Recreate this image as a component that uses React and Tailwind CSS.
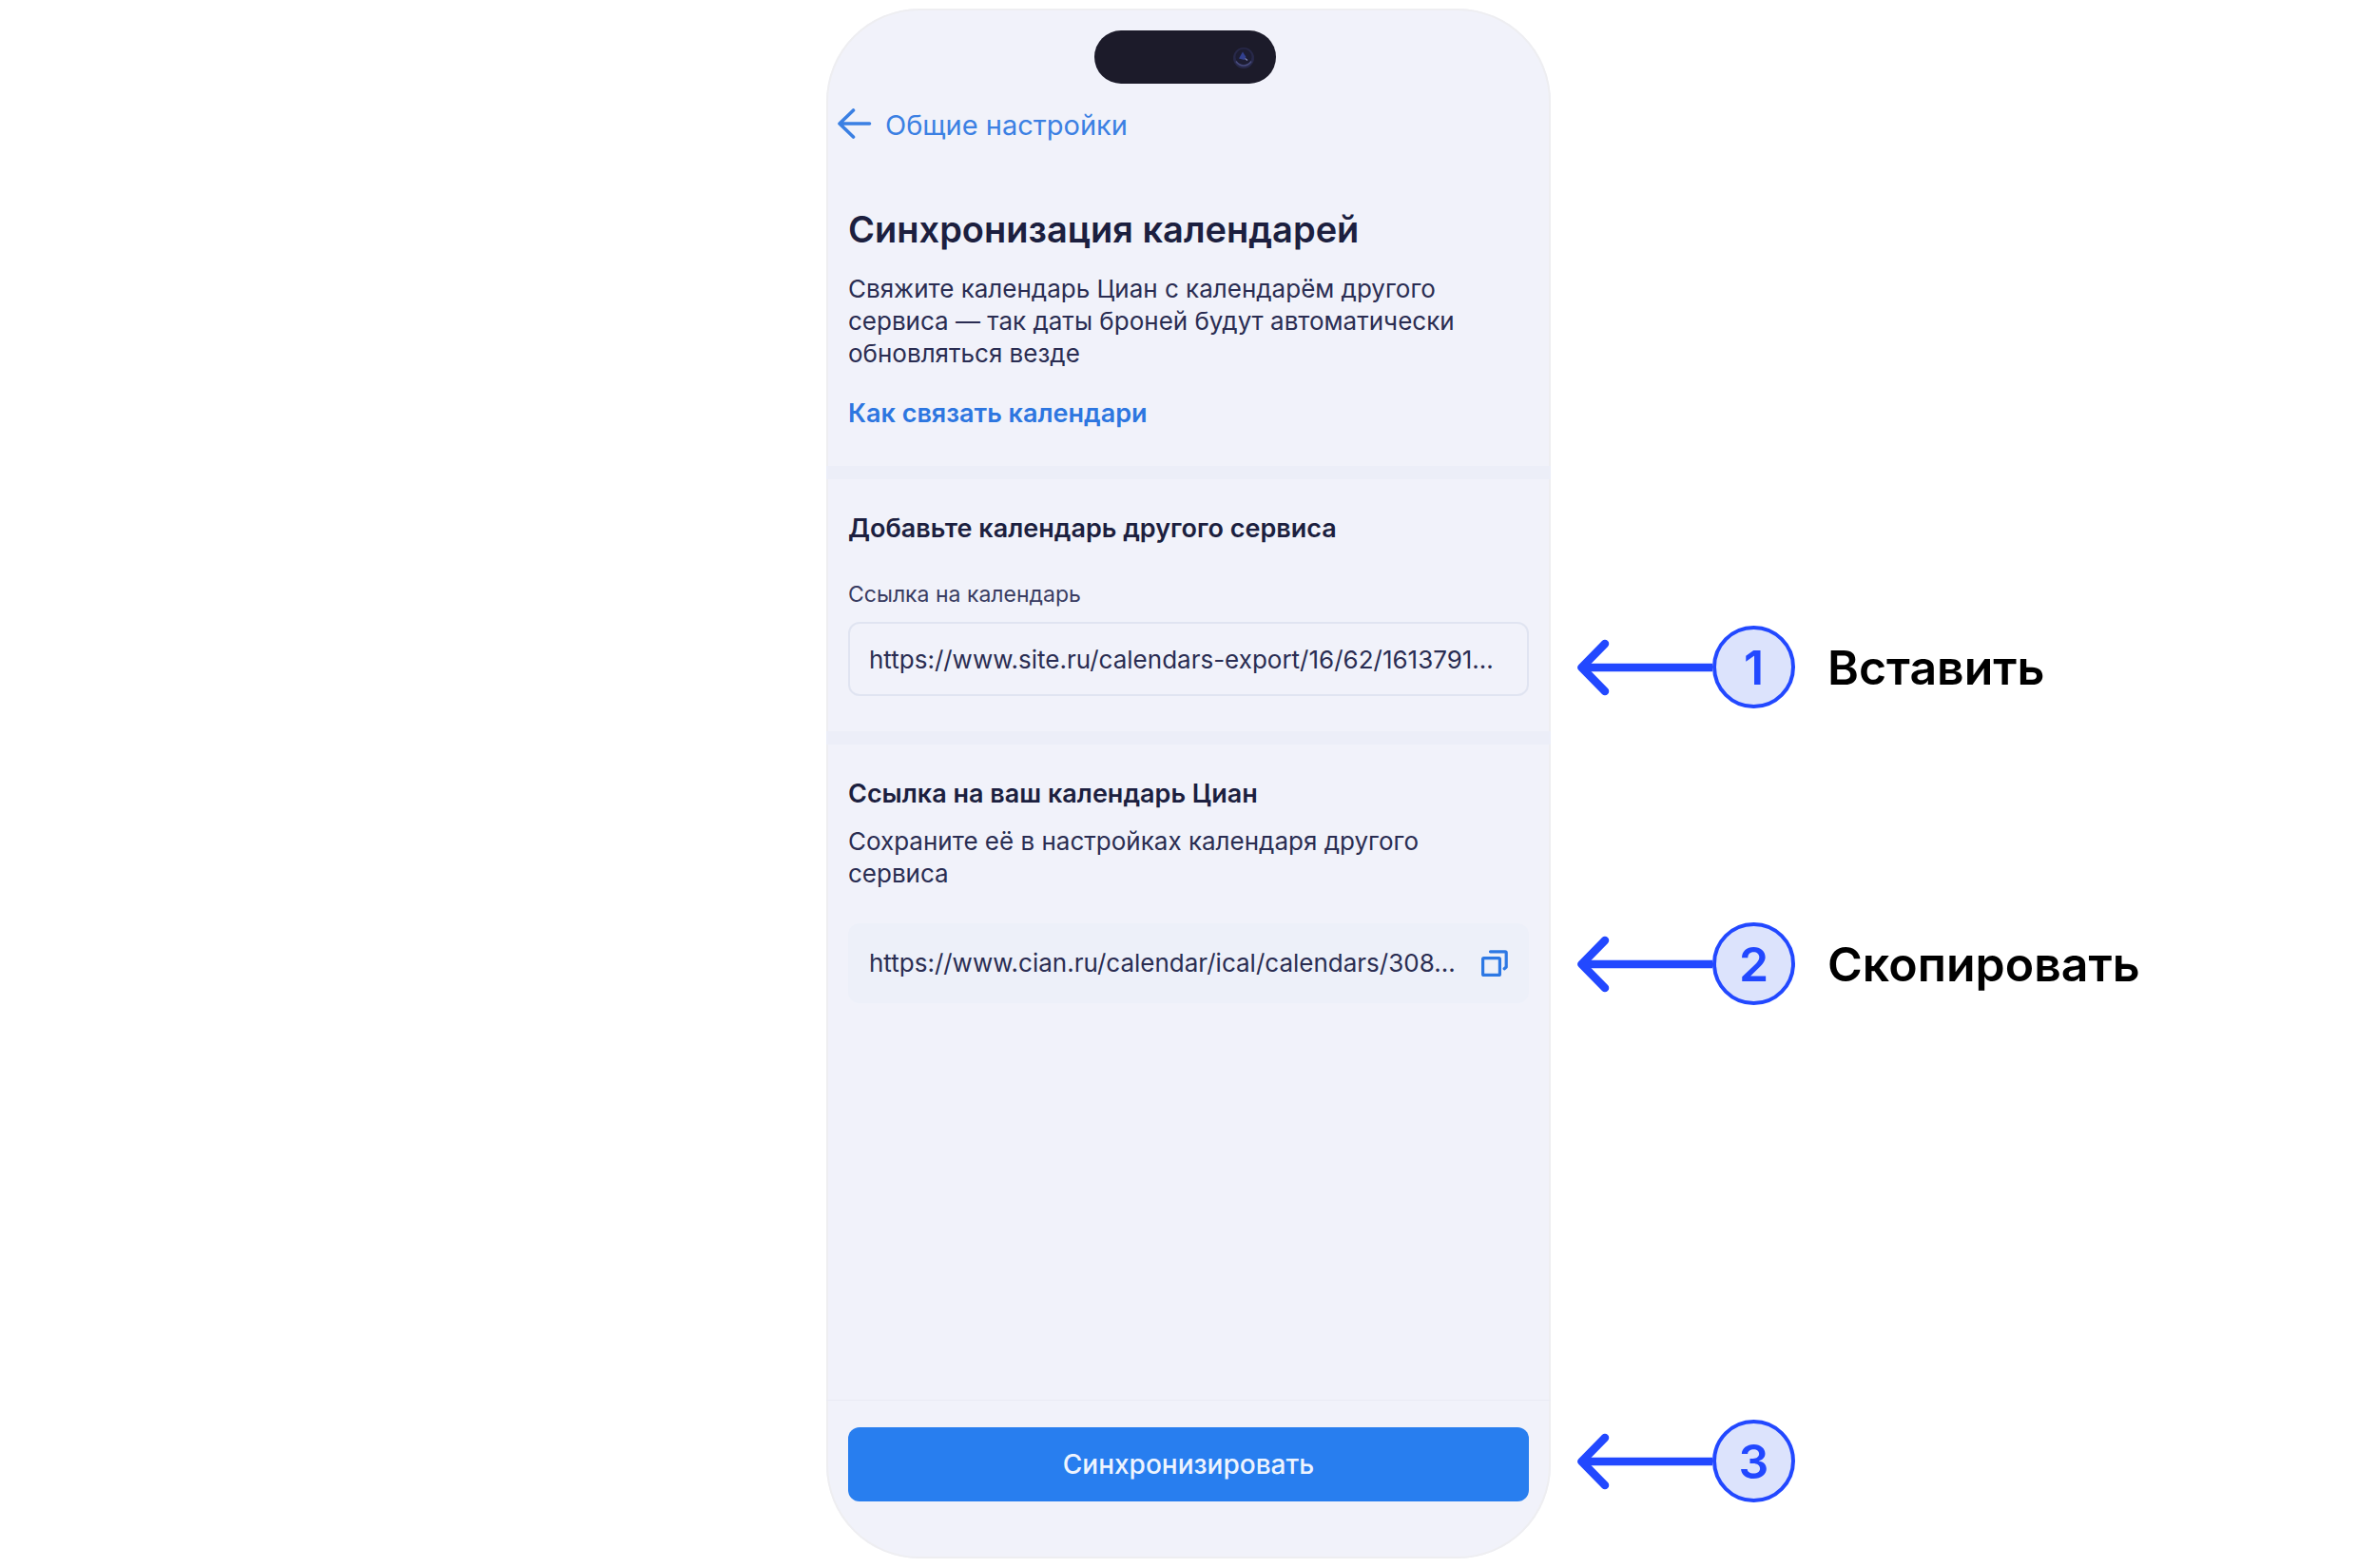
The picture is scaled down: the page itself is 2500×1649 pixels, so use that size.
import React, { useState } from 'react';

const STEPS = [
  { n: 1, label: 'Вставить', spacing: '' },
  { n: 2, label: 'Скопировать', spacing: 'mt-[225px]' },
  { n: 3, label: '', spacing: 'mt-auto' },
];

function BackArrow() {
  return (
    <svg className="w-9 h-8 shrink-0" viewBox="0 0 36 32" fill="none" stroke="currentColor" strokeWidth="3.6" strokeLinecap="round" strokeLinejoin="round" aria-hidden="true">
      <path d="M33.5 16H2M16.5 2L2 16l14.5 14" />
    </svg>
  );
}

function CopyIcon() {
  return (
    <svg className="w-7 h-7" viewBox="0 0 28 28" fill="none" stroke="currentColor" strokeWidth="3.2" strokeLinecap="round" strokeLinejoin="round" aria-hidden="true">
      <rect x="1.6" y="8.6" width="17.8" height="17.8" rx="1" />
      <path d="M9.5 1.8H25a1.2 1.2 0 0 1 1.2 1.2v15l-2 1.8" />
    </svg>
  );
}

function DynamicIsland() {
  return (
    <div className="w-[191px] h-14 rounded-full bg-[#1c1b2a] flex items-center justify-end pr-[22px]">
      <svg className="w-6 h-6" viewBox="0 0 24 24" aria-hidden="true">
        <circle cx="12" cy="13" r="11" fill="#28294a" />
        <circle cx="12" cy="12" r="8.5" fill="#1d1d33" />
        <path d="M7 13.5L11 6.5l3.5 5.5-2 3z" fill="#32408f" />
        <path d="M13.5 13.5l2.5 2" stroke="#7d84b5" strokeWidth="1.5" />
        <path d="M4 16.5a9.5 9.5 0 0 0 16 0" fill="none" stroke="#464a7c" strokeWidth="1.5" />
      </svg>
    </div>
  );
}

function Step({ n, label, spacing }) {
  return (
    <li className={`flex items-center ${spacing}`}>
      <svg className="w-[142px] h-[60px] shrink-0" viewBox="0 0 142 60" fill="none" stroke="#2248ff" strokeWidth="8.5" strokeLinecap="round" strokeLinejoin="round" aria-hidden="true">
        <path d="M29 5L4.5 30L29 55" />
        <path d="M5 30h137" strokeLinecap="butt" />
      </svg>
      <span className="size-[87px] shrink-0 rounded-full border-4 border-[#2248ff] bg-[#dce3fc] text-[#2248ff] text-[50px] leading-none font-semibold flex items-center justify-center">
        {n}
      </span>
      {label && <span className="ml-[34px] text-[50px] leading-none font-semibold text-black">{label}</span>}
    </li>
  );
}

export default function App() {
  const [url, setUrl] = useState('https://www.site.ru/calendars-export/16/62/1613791...');
  const exportUrl = 'https://www.cian.ru/calendar/ical/calendars/308...';

  const handleCopy = async () => {
    try {
      await navigator.clipboard.writeText(exportUrl);
    } catch (e) {}
  };

  return (
    <div className="min-h-screen bg-white grid grid-cols-[1fr_762px_1fr] font-['Inter',sans-serif] text-[26px] leading-[34px] text-[#2a2d52]">
      {/* Phone */}
      <main className="col-start-2 mt-[9px] mb-[10px] rounded-[98px] bg-[#f1f2fa] shadow-[inset_0_0_0_2px_#eeeef1] flex flex-col overflow-hidden">
        <div className="pt-[23px] pr-[7px] flex justify-center">
          <DynamicIsland />
        </div>

        <nav className="mt-[26px] px-3">
          <a href="#settings" className="flex w-fit items-start gap-[14px] text-[29px] leading-9 text-[#3b80e3]">
            <BackArrow />
            Общие настройки
          </a>
        </nav>

        {/* Intro */}
        <section className="px-[23px] pt-[67px] pb-[38px]">
          <h1 className="text-[38px] leading-[48px] font-semibold text-[#1c1f3f]">Синхронизация календарей</h1>
          <p className="mt-[22px] pr-10">
            Свяжите календарь Циан с календарём другого сервиса — так даты броней будут автоматически обновляться везде
          </p>
          <a href="#help" className="mt-[29px] block w-fit text-[27px] font-semibold text-[#2d76e0]">Как связать календари</a>
        </section>

        <div className="h-[14px] bg-[#eceef8]"></div>

        {/* Import */}
        <section className="px-[23px] pt-[35px] pb-[37px]">
          <h2 className="text-[27px] font-semibold text-[#1c1f3f]">Добавьте календарь другого сервиса</h2>
          <label htmlFor="import-url" className="mt-9 block text-[23px] leading-8 text-[#3a3d62]">Ссылка на календарь</label>
          <input
            id="import-url"
            type="text"
            value={url}
            onChange={(e) => setUrl(e.target.value)}
            className="mt-[13px] block w-full h-[78px] rounded-xl border-2 border-[#e0e4f1] bg-transparent px-5 outline-none"
          />
        </section>

        <div className="h-[14px] bg-[#eceef8]"></div>

        {/* Export */}
        <section className="px-[23px] pt-[35px]">
          <h2 id="export-title" className="text-[27px] font-semibold text-[#1c1f3f]">Ссылка на ваш календарь Циан</h2>
          <p className="mt-4 pr-10">Сохраните её в настройках календаря другого сервиса</p>
          <div className="mt-[35px] h-[84px] rounded-xl bg-[#edf0f9] px-[22px] flex items-center gap-5">
            <input type="text" readOnly value={exportUrl} aria-labelledby="export-title" className="flex-1 min-w-0 bg-transparent outline-none" />
            <button type="button" onClick={handleCopy} aria-label="Скопировать" className="text-[#2d78e4]">
              <CopyIcon />
            </button>
          </div>
        </section>

        <footer className="mt-auto border-t border-[#eaebf4] px-[23px] pt-7 pb-[60px]">
          <button type="button" className="w-full h-[78px] rounded-xl bg-[#287eef] text-[28px] font-medium text-[#eef4fe]">
            Синхронизировать
          </button>
        </footer>
      </main>

      {/* Numbered steps next to the fields they refer to */}
      <ol className="col-start-3 pl-7 pt-[658px] pb-[69px] flex flex-col">
        {STEPS.map((step) => (
          <Step key={step.n} {...step} />
        ))}
      </ol>
    </div>
  );
}
